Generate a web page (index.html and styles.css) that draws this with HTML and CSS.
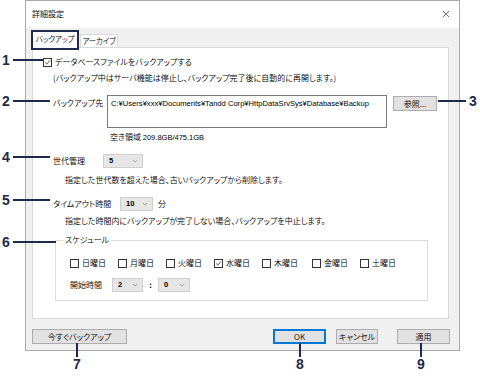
FILE: index.html
```html
<!DOCTYPE html>
<html lang="ja">

<head>
  <meta charset="UTF-8">
  <title>詳細設定</title>
  <link rel="stylesheet" href="styles.css">
</head>

<body>

  <div class="dialog">

    <!-- Title bar -->
    <div class="titlebar">
      <span class="title">詳細設定</span>
      <svg class="close" viewBox="0 0 10 10"><path d="M1,1 L9,9 M9,1 L1,9" /></svg>
    </div>

    <div class="client">

      <!-- Tabs -->
      <div class="tabs">
        <div class="tab active">バックアップ</div>
        <div class="tab">アーカイブ</div>
      </div>

      <div class="panel">

        <div class="check first">
          <span class="box checked"><svg viewBox="0 0 9 9"><path d="M1.5,4.5 L3.6,6.6 L7.6,1.8" /></svg></span>
          <span>データベースファイルをバックアップする</span>
        </div>
        <p class="note">(バックアップ中はサーバ機能は停止し、バックアップ完了後に自動的に再開します。)</p>

        <div class="path-row">
          <span class="label path-label">バックアップ先</span>
          <div class="path-box">C:¥Users¥xxx¥Documents¥Tandd Corp¥HttpDataSrvSys¥Database¥Backup</div>
          <div class="btn browse">参照...</div>
        </div>
        <p class="free">空き領域 <span class="latin">209.8GB/475.1GB</span></p>

        <div class="field-row gen-row">
          <span class="label gen-label">世代管理</span>
          <div class="select gen-select"><span>5</span><svg viewBox="0 0 8 5"><path d="M1,1 L4,4 L7,1" /></svg></div>
        </div>
        <p class="desc">指定した世代数を超えた場合、古いバックアップから削除します。</p>

        <div class="field-row timeout-row">
          <span class="label timeout-label">タイムアウト時間</span>
          <div class="select timeout-select"><span>10</span><svg viewBox="0 0 8 5"><path d="M1,1 L4,4 L7,1" /></svg></div>
          <span class="unit">分</span>
        </div>
        <p class="desc">指定した時間内にバックアップが完了しない場合、バックアップを中止します。</p>

        <!-- Schedule group -->
        <div class="group">
          <div class="legend">スケジュール</div>
          <div class="days">
            <div class="check day"><span class="box"></span><span>日曜日</span></div>
            <div class="check day"><span class="box"></span><span>月曜日</span></div>
            <div class="check day"><span class="box"></span><span>火曜日</span></div>
            <div class="check day"><span class="box checked"><svg viewBox="0 0 9 9"><path d="M1.5,4.5 L3.6,6.6 L7.6,1.8" /></svg></span><span>水曜日</span></div>
            <div class="check day"><span class="box"></span><span>木曜日</span></div>
            <div class="check day"><span class="box"></span><span>金曜日</span></div>
            <div class="check day"><span class="box"></span><span>土曜日</span></div>
          </div>
          <div class="start-row">
            <span class="label start-label">開始時間</span>
            <div class="select hour-select"><span>2</span><svg viewBox="0 0 8 5"><path d="M1,1 L4,4 L7,1" /></svg></div>
            <span class="colon">:</span>
            <div class="select min-select"><span>0</span><svg viewBox="0 0 8 5"><path d="M1,1 L4,4 L7,1" /></svg></div>
          </div>
        </div>

      </div>

      <!-- Bottom buttons -->
      <div class="footer">
        <div class="btn now">今すぐバックアップ</div>
        <div class="btn ok">OK</div>
        <div class="btn cancel">キャンセル</div>
        <div class="btn apply">適用</div>
      </div>

    </div>
  </div>

  <!-- Callouts -->
  <div class="callout n1"><span class="num">1</span><span class="hline"></span></div>
  <div class="callout n2"><span class="num">2</span><span class="hline"></span></div>
  <div class="callout n3"><span class="hline"></span><span class="num">3</span></div>
  <div class="callout n4"><span class="num">4</span><span class="hline"></span></div>
  <div class="callout n5"><span class="num">5</span><span class="hline"></span></div>
  <div class="callout n6"><span class="num">6</span><span class="hline"></span></div>
  <div class="vcallout n7"><span class="vline"></span><span class="num">7</span></div>
  <div class="vcallout n8"><span class="vline"></span><span class="num">8</span></div>
  <div class="vcallout n9"><span class="vline"></span><span class="num">9</span></div>

</body>

</html>
```

FILE: styles.css
```css
/* Page */
body {
  margin: 0;
  width: 480px;
  height: 376px;
  position: relative;
  background: #fff;
  color: #000;
  font-family: "Noto Sans CJK JP", "Noto Sans", sans-serif;
  font-size: 8px;
  font-weight: 350;
  font-feature-settings: "palt";
  line-height: 12px;
  white-space: nowrap;
}
p {
  margin: 0;
}
.latin {
  font-family: "Liberation Sans", Arial, sans-serif;
  font-size: 7.5px;
}

/* Dialog window */
.dialog {
  margin-left: 25px;
  width: 435px;
  height: 351px;
  box-sizing: border-box;
  border: 1px solid #a9a9a9;
  background: #f0f0f0;
}
.titlebar {
  height: 27px;
  background: #fff;
  display: flex;
  align-items: center;
  padding: 0 6px 2px 6px;
  box-sizing: border-box;
}
.title {
  flex: 1;
}
.close {
  width: 8px;
  height: 8px;
  margin-right: 3px;
}
.close path {
  stroke: #333;
  stroke-width: 0.9;
  fill: none;
}
.client {
  padding: 2px 0 0 5px;
}

/* Tabs */
.tabs {
  display: flex;
  align-items: flex-end;
  height: 17px;
  position: relative;
  z-index: 1;
}
.tab {
  height: 13px;
  width: 38px;
  box-sizing: border-box;
  border: 1px solid #d9d9d9;
  border-bottom: none;
  background: #fff;
  display: flex;
  align-items: center;
  justify-content: center;
  margin-left: 1px;
  font-size: 7.5px;
  letter-spacing: -0.2px;
}
.tab.active {
  align-self: flex-start;
  height: 20px;
  width: 48px;
  margin: 0 0 -3px 0;
  border: 2px solid #1d2a4c;
  padding-bottom: 2px;
}

/* Tab panel */
.panel {
  margin-left: 1px;
  width: 417px;
  height: 272px;
  box-sizing: border-box;
  border: 1px solid #d9d9d9;
  background: #fff;
  padding: 0 0 0 10px;
}

/* Checkboxes */
.check {
  display: flex;
  align-items: center;
  height: 12px;
}
.check.first {
  margin-top: 8px;
}
.box {
  width: 9px;
  height: 9px;
  box-sizing: border-box;
  border: 1px solid #333;
  background: #fff;
  margin-right: 3px;
  display: flex;
}
.box svg {
  width: 7px;
  height: 7px;
}
.box path {
  fill: none;
  stroke: #222;
  stroke-width: 1;
}

.note {
  margin: 4px 0 0 10px;
}

/* Backup destination */
.path-row {
  display: flex;
  align-items: flex-start;
  margin: 11px 0 0 10px;
}
.label {
  padding-top: 2px;
}
.path-label {
  width: 54px;
  padding-top: 2px;
}
.path-box {
  width: 280px;
  height: 33px;
  box-sizing: border-box;
  border: 1px solid #7a7a7a;
  padding: 2px 3px;
  font-family: "Liberation Sans", Arial, sans-serif;
  font-size: 7.6px;
  overflow: hidden;
}
.btn {
  height: 15px;
  box-sizing: border-box;
  border: 1px solid #adadad;
  background: #e1e1e1;
  display: flex;
  align-items: center;
  justify-content: center;
}
.browse {
  width: 44px;
  margin: 1px 0 0 6px;
}
.free {
  margin: 3px 0 0 67px;
}

/* Generation / timeout */
.field-row {
  display: flex;
  align-items: center;
  height: 15px;
  margin-left: 10px;
}
.field-row .label {
  padding-top: 0;
}
.gen-row {
  margin-top: 9px;
}
.gen-label {
  width: 50px;
}
.timeout-row {
  margin-top: 10px;
}
.timeout-label {
  width: 67px;
}
.select {
  height: 14px;
  box-sizing: border-box;
  border: 1px solid #cfcfcf;
  background: #e6e6e6;
  display: flex;
  align-items: center;
  justify-content: space-between;
  padding: 0 4px 0 5px;
  font-family: "Liberation Sans", Arial, sans-serif;
  font-weight: 700;
  font-size: 7.5px;
}
.select svg {
  width: 6px;
  height: 4px;
}
.select path {
  fill: none;
  stroke: #8a8a8a;
  stroke-width: 1;
}
.gen-select {
  width: 40px;
}
.timeout-select {
  width: 33px;
}
.unit {
  margin-left: 5px;
}
.desc {
  margin: 6px 0 0 22px;
}
.timeout-row + .desc {
  margin-top: 4px;
}

/* Schedule group */
.group {
  margin: 13px 0 0 12px;
  width: 373px;
  height: 61px;
  box-sizing: border-box;
  border: 1px solid #dcdcdc;
  padding-left: 14px;
}
.legend {
  width: fit-content;
  margin: -7px 0 0 -7px;
  padding: 0 2px;
  background: #fff;
}
.days {
  display: flex;
  margin-top: 11px;
}
.day {
  width: 48px;
}
.day:nth-child(5) {
  width: 50px;
}
.start-row {
  display: flex;
  align-items: center;
  margin-top: 9px;
  height: 14px;
}
.start-label {
  width: 42px;
  padding-top: 0;
}
.hour-select {
  width: 31px;
}
.colon {
  width: 15px;
  text-align: center;
  font-weight: bold;
}
.min-select {
  width: 32px;
}

/* Footer buttons */
.footer {
  display: flex;
  width: 418px;
  margin-top: 10px;
  padding-left: 1px;
}
.now {
  width: 95px;
  margin-right: auto;
}
.ok {
  width: 53px;
  border: 2px solid #0078d7;
}
.cancel {
  width: 42px;
  margin-left: 10px;
}
.apply {
  width: 53px;
  margin-left: 19px;
}

/* Callouts */
.callout, .vcallout {
  position: absolute;
  display: flex;
  align-items: center;
}
.num {
  font-family: "Liberation Sans", Arial, sans-serif;
  font-weight: 700;
  font-size: 14px;
  line-height: 14px;
  color: #1d2a4c;
}
.hline {
  height: 2px;
  background: #1d2a4c;
}
.vline {
  width: 2px;
  height: 14px;
  background: #1d2a4c;
}
.callout {
  left: 2px;
  height: 14px;
}
.callout .num {
  width: 11px;
}
.n1 { top: 53px; }
.n1 .hline { width: 30px; }
.n2 { top: 94px; }
.n2 .hline { width: 37px; }
.n3 { top: 94px; left: 438px; }
.n3 .hline { width: 28px; margin-right: 3px; }
.n4 { top: 150px; }
.n4 .hline { width: 37px; }
.n5 { top: 193px; }
.n5 .hline { width: 37px; }
.n6 { top: 235px; }
.n6 .hline { width: 43px; }
.vcallout {
  flex-direction: column;
  top: 343px;
  width: 12px;
}
.n7 { left: 71px; }
.n8 { left: 294px; }
.n9 { left: 415px; }
```
